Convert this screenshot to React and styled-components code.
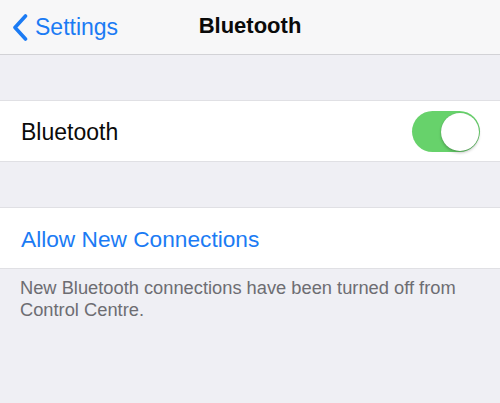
import React from "react";
import styled, { createGlobalStyle } from "styled-components";

const Global = createGlobalStyle`
  html, body { margin: 0; padding: 0; }
  body {
    background: #efeff4;
    font-family: "Liberation Sans", Arial, sans-serif;
    -webkit-font-smoothing: antialiased;
  }
`;

const Page = styled.div`
  width: 500px;
  height: 403px;
  background: #efeff4;
  display: flex;
  flex-direction: column;
  overflow: hidden;
`;

const NavBar = styled.header`
  height: 54px;
  background: #f7f7f8;
  border-bottom: 1px solid #d2d2d6;
  box-sizing: content-box;
  display: grid;
  grid-template-columns: 1fr auto 1fr;
  align-items: center;
`;

const Back = styled.div`
  display: flex;
  align-items: center;
  gap: 7px;
  padding-left: 12px;
  color: #1b7bf4;
  font-size: 23px;
`;

const Title = styled.h1`
  margin: 0;
  font-size: 22px;
  font-weight: 700;
  color: #0a0a0a;
  margin-top: -2px;
`;

const Gap = styled.div`
  height: ${(p) => p.$h}px;
`;

const Cell = styled.div`
  height: 60px;
  background: #fff;
  border-top: 1px solid #e0e0e4;
  border-bottom: 1px solid #e0e0e4;
  display: flex;
  align-items: center;
  justify-content: space-between;
  padding: 0 20px 0 21px;
`;

const Label = styled.span`
  font-size: ${(p) => (p.$link ? "22.7px" : "23px")};
  color: ${(p) => (p.$link ? "#1b7bf4" : "#0a0a0a")};
  margin-top: 3px;
`;

const Track = styled.div`
  width: 68px;
  height: 41px;
  border-radius: 21px;
  background: #67d26b;
  position: relative;
  margin-top: 1px;
`;

const Knob = styled.div`
  position: absolute;
  right: 1px;
  top: 1.5px;
  width: 38px;
  height: 38px;
  border-radius: 50%;
  background: #fff;
  box-shadow: 0 2px 3px rgba(0, 0, 0, 0.22), 0 0 1px rgba(0, 0, 0, 0.2);
`;

const Footer = styled.p`
  margin: 0;
  padding: 8px 20px 0 20px;
  font-size: 18.3px;
  line-height: 21.5px;
  color: #6d6d72;
`;

export default function App() {
  return (
    <>
      <Global />
      <Page>
        <NavBar>
          <Back>
            <svg width="16" height="27" viewBox="0 0 16 27">
              <path
                d="M13.5 2 L3 13.5 L13.5 25"
                fill="none"
                stroke="#1b7bf4"
                strokeWidth="3.6"
                strokeLinecap="round"
                strokeLinejoin="round"
              />
            </svg>
            <span>Settings</span>
          </Back>
          <Title>Bluetooth</Title>
          <div />
        </NavBar>
        <Gap $h={45} />
        <Cell>
          <Label>Bluetooth</Label>
          <Track>
            <Knob />
          </Track>
        </Cell>
        <Gap $h={45} />
        <Cell>
          <Label $link>Allow New Connections</Label>
        </Cell>
        <Footer>
          New Bluetooth connections have been turned off from Control Centre.
        </Footer>
      </Page>
    </>
  );
}
